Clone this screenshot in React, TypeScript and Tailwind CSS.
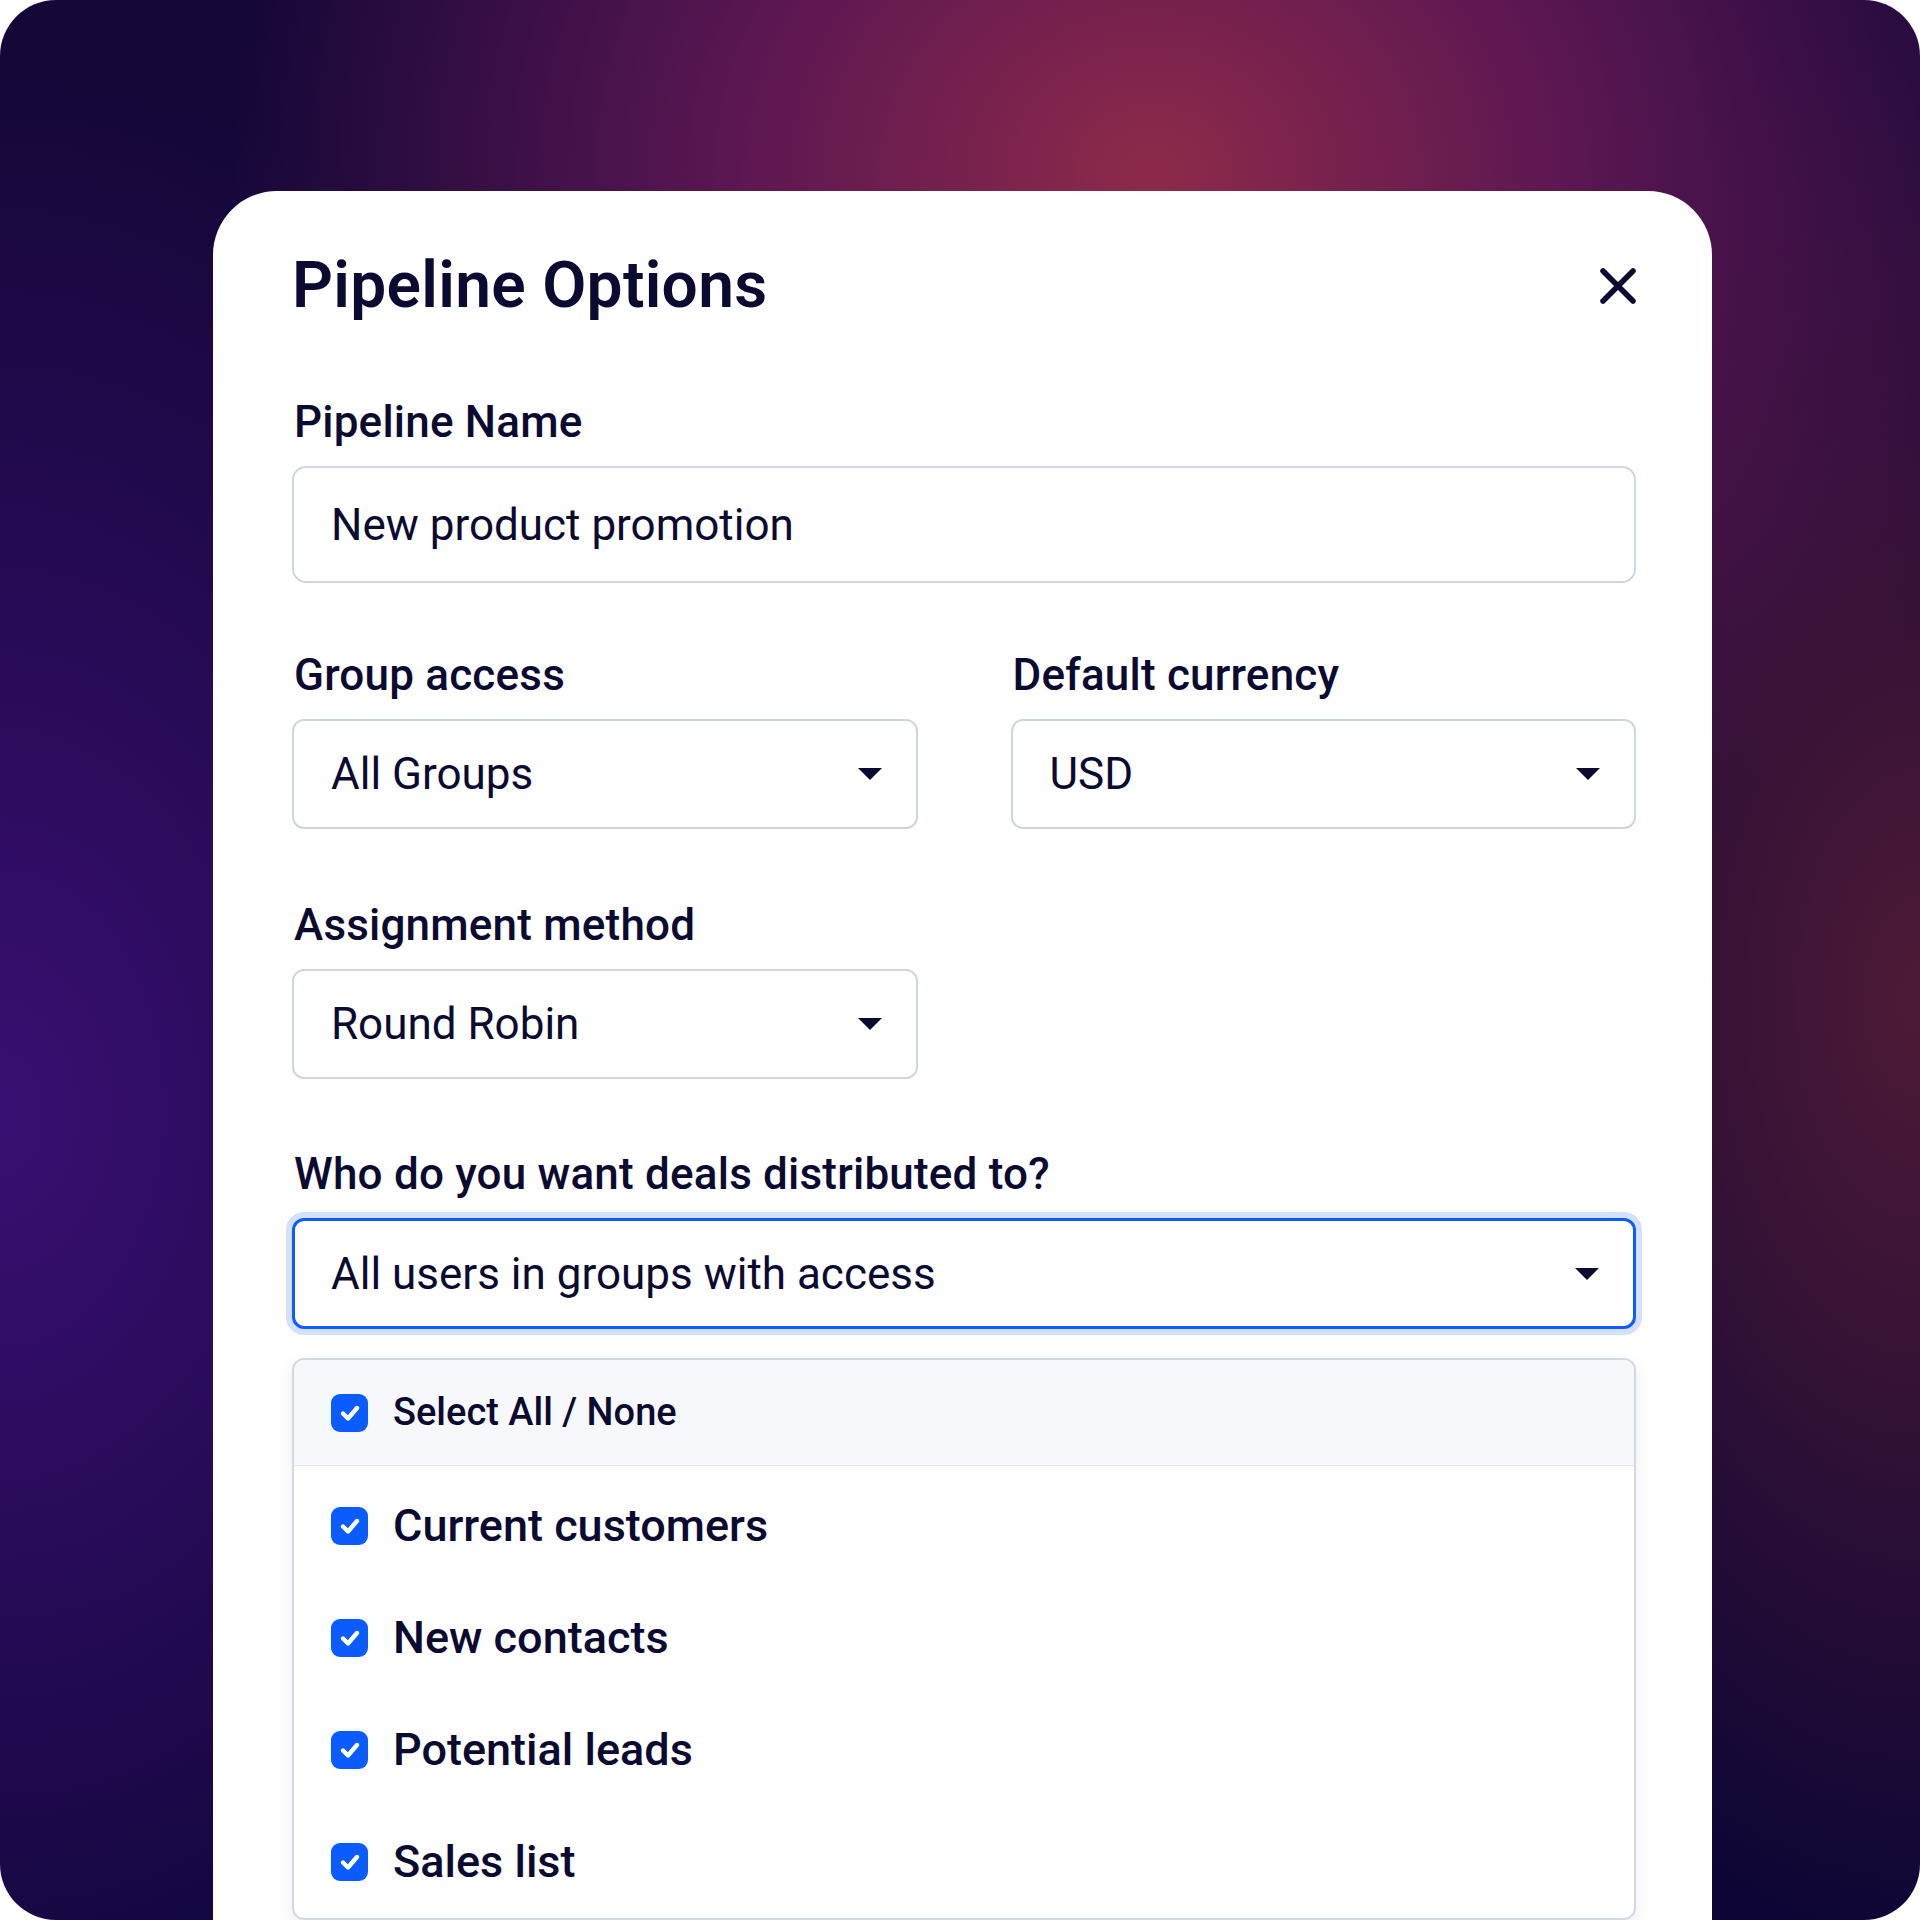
import React from 'react';

const Caret = () => (
  <svg width="24" height="12" viewBox="0 0 24 12" className="shrink-0">
    <path d="M0 0 H24 L12 12 Z" fill="#0b0a30" />
  </svg>
);

const Checkbox = () => (
  <div className="w-[37px] h-[38px] rounded-[9px] bg-[#0b5cff] flex items-center justify-center shrink-0">
    <svg width="26" height="26" viewBox="0 0 26 26">
      <path d="M6 13.5 L11 18.5 L20 8" fill="none" stroke="#fff" strokeWidth="4.4" strokeLinecap="round" strokeLinejoin="round" />
    </svg>
  </div>
);

const Label = ({ children }: { children: React.ReactNode }) => (
  <div className="text-[44px] leading-[50px] font-medium tracking-[0.2px] text-[#0b0a30] mb-[19px] pl-[2px]">{children}</div>
);

const Select = ({ value }: { value: string }) => (
  <div className="h-[110px] border-2 border-[#cfd5e2] rounded-[12px] bg-white flex items-center justify-between pl-[37px] pr-[34px]">
    <span className="text-[44px] text-[#0b0a30]">{value}</span>
    <Caret />
  </div>
);

const items = ['Current customers', 'New contacts', 'Potential leads', 'Sales list'];

export default function App() {
  return (
    <div className="w-[1920px] h-[1920px] bg-white font-['Roboto','Noto_Sans',sans-serif]">
      <div className="w-full h-full rounded-[56px] overflow-hidden pl-[213px] pt-[191px] bg-[radial-gradient(ellipse_48%_42%_at_60%_9%,#8e2a4a_0%,#5c1752_45%,transparent_100%),radial-gradient(ellipse_38%_55%_at_0%_58%,#3a0f72_0%,transparent_100%),radial-gradient(ellipse_28%_50%_at_100%_52%,#4e1a36_0%,transparent_100%),linear-gradient(180deg,#150738_0%,#0c0535_100%)]">
        <div className="w-[1499px] h-[1729px] bg-white rounded-t-[64px] pt-[63px] pl-[79px] pr-[76px]">
          {/* header */}
          <div className="flex items-center justify-between">
            <h1 className="text-[64px] leading-[64px] font-semibold tracking-[0.3px] text-[#0b0a30]">Pipeline Options</h1>
            <svg width="36" height="36" viewBox="0 0 36 36">
              <path d="M3 3 L33 33 M33 3 L3 33" stroke="#0b0a30" strokeWidth="5.5" strokeLinecap="round" />
            </svg>
          </div>

          <div className="mt-[79px]">
            <Label>Pipeline Name</Label>
            <div className="h-[117px] border-2 border-[#cfd5e2] rounded-[14px] flex items-center pl-[37px]">
              <span className="text-[44px] text-[#0b0a30]">New product promotion</span>
            </div>
          </div>

          <div className="mt-[67px] grid grid-cols-2 gap-[93px]">
            <div>
              <Label>Group access</Label>
              <Select value="All Groups" />
            </div>
            <div>
              <Label>Default currency</Label>
              <Select value="USD" />
            </div>
          </div>

          <div className="mt-[71px] grid grid-cols-2 gap-[93px]">
            <div>
              <Label>Assignment method</Label>
              <Select value="Round Robin" />
            </div>
          </div>

          <div className="mt-[70px]">
            <Label>Who do you want deals distributed to?</Label>
            <div className="h-[111px] border-[3px] border-[#0f5bff] rounded-[12px] shadow-[0_0_0_6px_#d3e0ff] flex items-center justify-between pl-[36px] pr-[34px]">
              <span className="text-[44px] text-[#0b0a30]">All users in groups with access</span>
              <Caret />
            </div>
          </div>

          <div className="mt-[29px] border-2 border-[#d3d8e3] rounded-[12px] overflow-hidden shadow-[0_6px_16px_rgba(20,24,70,0.08)]">
            <div className="h-[106px] bg-[#f7f8fc] border-b border-[#e3e6ee] flex items-center gap-[25px] pl-[37px]">
              <Checkbox />
              <span className="text-[38px] font-medium text-[#0b0a30]">Select All / None</span>
            </div>
            <div className="pt-[4px]">
              {items.map((item) => (
                <div key={item} className="h-[112px] flex items-center gap-[25px] pl-[37px]">
                  <Checkbox />
                  <span className="text-[45px] font-medium text-[#0b0a30]">{item}</span>
                </div>
              ))}
            </div>
          </div>
        </div>
      </div>
    </div>
  );
}
